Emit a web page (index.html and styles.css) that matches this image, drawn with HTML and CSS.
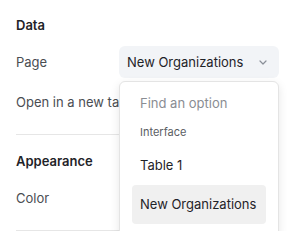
FILE: index.html
```html
<!DOCTYPE html>
<html lang="en">
<head>
  <meta charset="UTF-8">
  <title>Settings</title>
  <link rel="stylesheet" href="styles.css">
</head>
<body>
  <div class="panel">
    <div class="section">
      <div class="heading">Data</div>
      <div class="row">
        <span class="label">Page</span>
        <div class="select-wrap">
          <button class="select">
            <span>New Organizations</span>
            <svg class="chev" width="8" height="5" viewBox="0 0 8 5"><path d="M1 1l3 3 3-3" fill="none" stroke="#8a8f98" stroke-width="1.2" stroke-linecap="round" stroke-linejoin="round"/></svg>
          </button>
          <div class="menu">
            <div class="search">Find an option</div>
            <div class="group">Interface</div>
            <div class="option">Table 1</div>
            <div class="option active">New Organizations</div>
          </div>
        </div>
      </div>
      <div class="row">
        <span class="label">Open in a new tab</span>
      </div>
    </div>
    <div class="section">
      <div class="heading">Appearance</div>
      <div class="row">
        <span class="label">Color</span>
      </div>
    </div>
  </div>
</body>
</html>
```

FILE: styles.css
```css
body {
  margin: 0;
  font-family: Inter, "Noto Sans", sans-serif;
  font-size: 13px;
  color: #1f2328;
  background: #fff;
}
.panel {
  padding: 0 13px 0 16px;
}
.section {
  padding: 16px 0 16px;
  border-bottom: 1px solid #e6e6e6;
}
.section + .section {
  padding-top: 17px;
}
.heading {
  font-weight: 600;
  line-height: 18px;
  margin-bottom: 12px;
}
.row {
  display: flex;
  align-items: center;
  justify-content: space-between;
  height: 32px;
}
.row + .row {
  margin-top: 8px;
}
.label {
  color: #4a4d52;
}
.select-wrap {
  position: relative;
  width: 160px;
}
.select {
  width: 100%;
  height: 32px;
  display: flex;
  align-items: center;
  justify-content: space-between;
  padding: 0 12px 0 8px;
  border: none;
  border-radius: 6px;
  background: #f2f4f7;
  font: inherit;
  color: #1f2328;
}
.chev {
  display: block;
}
.menu {
  position: absolute;
  top: 35px;
  left: 0;
  width: 160px;
  box-sizing: border-box;
  padding: 0 12px 12px;
  background: #fff;
  border: 1px solid #e4e4e4;
  border-radius: 6px;
  box-shadow: 0 3px 10px rgba(0, 0, 0, 0.10);
}
.search {
  height: 42px;
  line-height: 42px;
  padding-left: 8px;
  color: #8a8d93;
}
.group {
  font-size: 11px;
  line-height: 16px;
  padding-left: 8px;
  margin-bottom: 6px;
  color: #5a5d63;
}
.option {
  height: 39px;
  line-height: 39px;
  padding-left: 8px;
  border-radius: 4px;
}
.option.active {
  background: #f0f0f0;
}
```
